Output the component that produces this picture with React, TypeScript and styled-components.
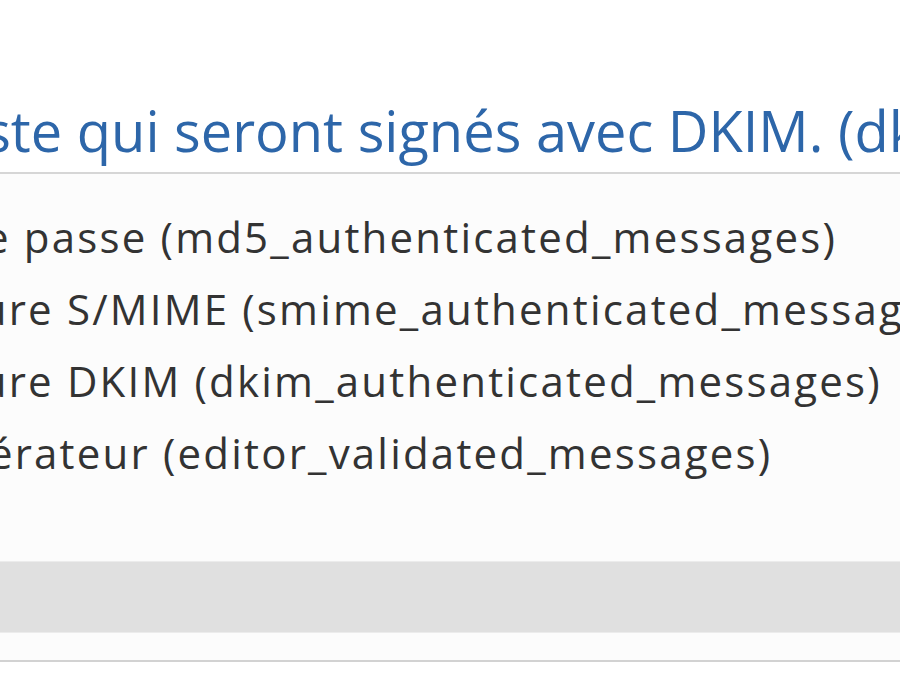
import React from "react"
import styled, { createGlobalStyle } from "styled-components"

const GlobalStyle = createGlobalStyle`
  html, body {
    margin: 0;
    padding: 0;
    background: #ffffff;
  }
  body {
    width: 900px;
    height: 700px;
    overflow: hidden;
    font-family: "Open Sans", "Noto Sans", sans-serif;
  }
`

const Page = styled.div`
  display: flex;
  flex-direction: column;
  width: 900px;
  height: 700px;
  overflow: hidden;
  padding-top: 92px;
  box-sizing: border-box;
`

interface shiftProps {
  shift: number
}

const Label = styled.div<shiftProps>`
  font-size: 56px;
  line-height: 76px;
  color: #2d66a9;
  white-space: nowrap;
  margin-left: ${props => props.shift}px;
  letter-spacing: 0;
`

const SelectBox = styled.div`
  display: flex;
  flex-direction: column;
  margin-top: 4px;
  background: #fcfcfc;
  border-top: 2px solid #d6d6d6;
  border-bottom: 2px solid #d2d2d2;
`

const OptionList = styled.ul`
  list-style: none;
  margin: 0;
  padding: 27px 0 0;
  height: 387px;
  box-sizing: border-box;
`

const Option = styled.li<shiftProps>`
  font-size: 42px;
  line-height: 72px;
  height: 72px;
  color: #333333;
  white-space: nowrap;
  margin-left: ${props => props.shift}px;
  letter-spacing: 2.2px;
`

const ScrollTrack = styled.div`
  height: 70px;
  background: #e0e0e0;
  border-top: 1px solid #ececec;
  border-bottom: 1px solid #ececec;
`

const Spacer = styled.div`
  height: 27px;
`

const options = [
  { text: "de passe (md5_authenticated_messages)", shift: -43 },
  { text: "ature S/MIME (smime_authenticated_messages)", shift: -62 },
  { text: "ature DKIM (dkim_authenticated_messages)", shift: -62 },
  { text: "dérateur (editor_validated_messages)", shift: -39 },
]

export default function App(): JSX.Element {
  return (
    <>
      <GlobalStyle />
      <Page>
        <Label shift={-30}>iste qui seront signés avec DKIM. (dkim_signature_apply_on)</Label>
        <SelectBox>
          <OptionList>
            {options.map(o => (
              <Option key={o.text} shift={o.shift}>
                {o.text}
              </Option>
            ))}
          </OptionList>
          <ScrollTrack />
          <Spacer />
        </SelectBox>
      </Page>
    </>
  )
}
